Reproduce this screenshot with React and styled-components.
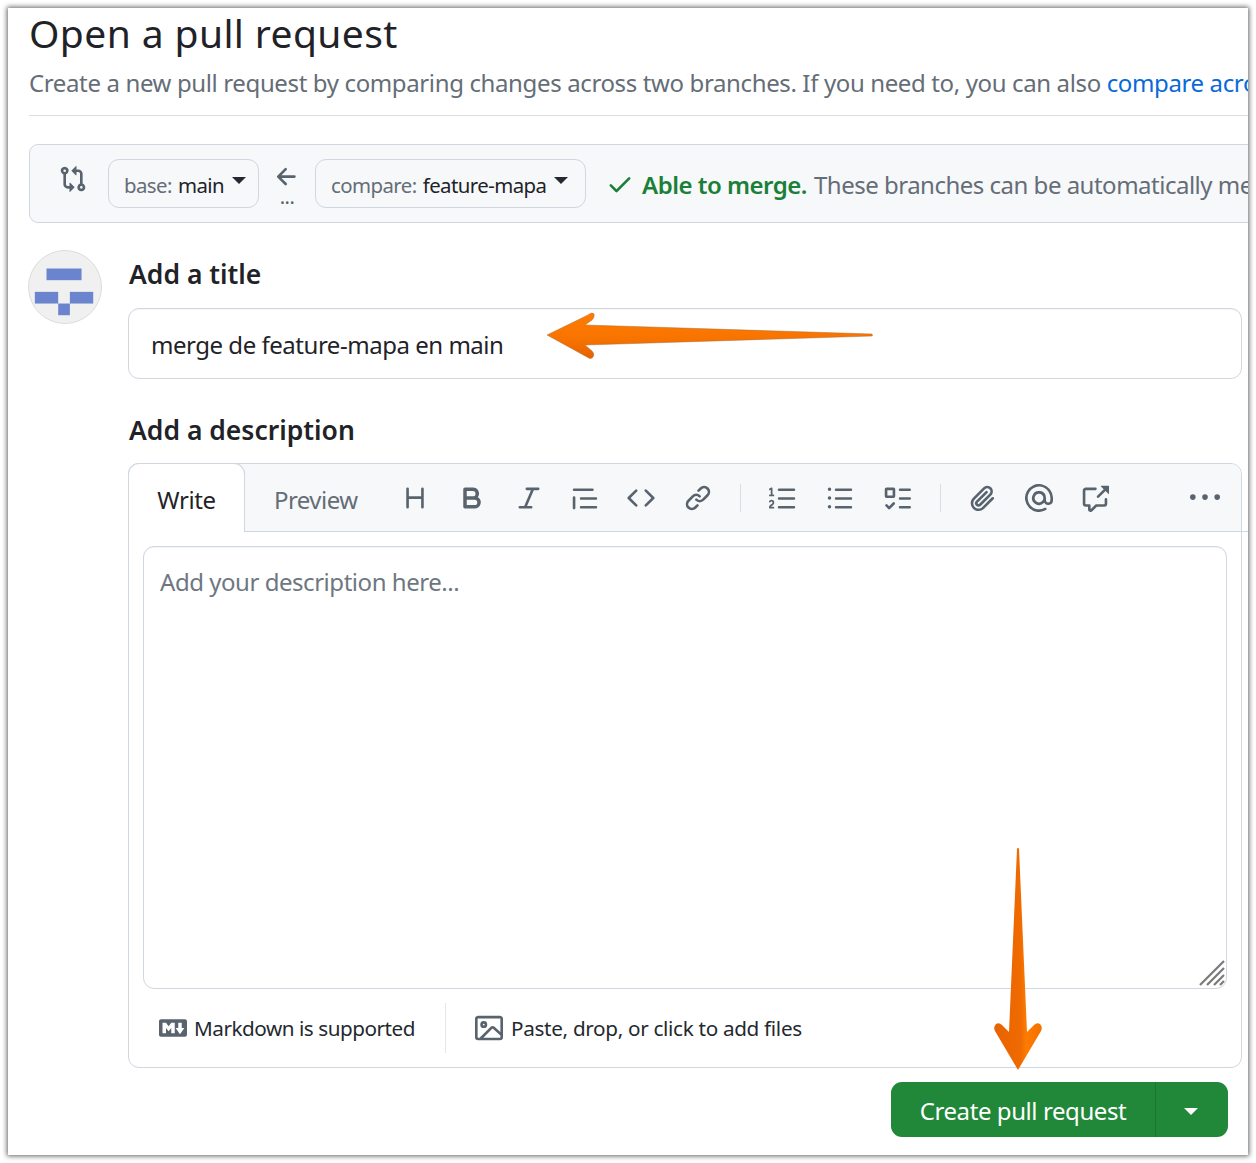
import React from "react";
import styled, { createGlobalStyle } from "styled-components";

const Global = createGlobalStyle`
  html, body { margin: 0; padding: 0; background: #fff; }
  body { font-family: "Noto Sans", "Open Sans", sans-serif; color: #1f2328; }
  * { box-sizing: border-box; }
`;

const Frame = styled.div`
  width: 1256px;
  height: 1163px;
  padding: 8px;
  overflow: hidden;
`;

const Panel = styled.main`
  position: relative;
  width: 1240px;
  height: 1147px;
  background: #fff;
  overflow: hidden;
  padding-left: 21px;
`;

const FrameShadow = styled.div`
  box-shadow: 0 0 5px 1px rgba(0, 0, 0, 0.62);
  width: 1240px;
  height: 1147px;
`;

const Title = styled.h1`
  margin: 0;
  font-size: 39px;
  font-weight: 400;
  line-height: 50px;
  white-space: nowrap;
  letter-spacing: 0.4px;
`;

const Sub = styled.p`
  margin: 8px 0 0 0;
  font-size: 24px;
  line-height: 34px;
  letter-spacing: -0.37px;
  color: #656d76;
  white-space: nowrap;
  height: 49px;
`;

const Link = styled.span`
  color: #0969da;
`;

const Rule = styled.div`
  height: 1px;
  background: #d8dee4;
  width: 1400px;
`;

const RangeBar = styled.section`
  display: flex;
  align-items: flex-start;
  width: 1400px;
  height: 79px;
  margin-top: 28px;
  background: #f6f8fa;
  border: 1px solid #d0d7de;
  border-radius: 9px;
  padding: 14px 0 0 29px;
  white-space: nowrap;
`;

const Ico = styled.svg`
  display: block;
  flex: none;
  fill: ${(p) => p.$color || "#59636e"};
`;

const CompareIco = styled.div`
  margin: 6px 21px 0 0;
`;

const Branch = styled.div`
  display: flex;
  align-items: center;
  width: ${(p) => p.$w}px;
  height: 49px;
  border: 1px solid #d0d7de;
  border-radius: 11px;
  padding: 2px 0 0 15px;
  font-size: 20.4px;
  letter-spacing: -0.56px;
  color: #656d76;
  position: relative;
`;

const BranchName = styled.span`
  color: #1f2328;
  margin-left: 6px;
`;

const Caret = styled.i`
  display: block;
  width: 0;
  height: 0;
  margin: -9px 0 0 8px;
  border-top: 7px solid #24292f;
  border-left: 7px solid transparent;
  border-right: 7px solid transparent;
`;

const Swap = styled.div`
  width: 56px;
  display: flex;
  flex-direction: column;
  align-items: center;
  padding-top: 4px;
  color: #59636e;
`;

const Dots = styled.span`
  font-size: 20px;
  line-height: 12px;
  margin-top: 0;
  letter-spacing: -0.5px;
`;

const Status = styled.div`
  display: flex;
  align-items: center;
  height: 50px;
  margin-left: 20px;
  font-size: 24px;
  letter-spacing: -0.5px;
  color: #656d76;
`;

const Able = styled.b`
  color: #1a7f37;
  font-weight: 600;
  margin: 0 7px 0 8px;
`;

const Composer = styled.section`
  display: grid;
  grid-template-columns: 74px 1114px;
  column-gap: 26px;
  margin: 27px 0 0 -1px;
`;

const Avatar = styled.div`
  width: 74px;
  height: 74px;
  border-radius: 50%;
  background: #f0f0f0;
  border: 1px solid #dcdcdc;
`;

const Label = styled.h2`
  margin: ${(p) => p.$top}px 0 0 1px;
  font-size: 26.5px;
  line-height: 36px;
  font-weight: 600;
  letter-spacing: 0;
`;

const TitleField = styled.div`
  height: 71px;
  margin-top: 16px;
  border: 1px solid #d0d7de;
  border-radius: 11px;
  padding: 2px 0 0 22px;
  display: flex;
  align-items: center;
  font-size: 24px;
  letter-spacing: -0.47px;
  box-shadow: inset 0 1px 0 rgba(208, 215, 222, 0.2);
  color: #1f2328;
`;

const Editor = styled.div`
  height: 605px;
  margin-top: 15px;
  border: 1px solid #d0d7de;
  border-radius: 11px;
  display: flex;
  flex-direction: column;
`;

const EditorHead = styled.div`
  display: flex;
  height: 68px;
  flex: none;
  background: #f6f8fa;
  border-radius: 11px 11px 0 0;
`;

const ActiveTab = styled.div`
  width: 117px;
  height: 69px;
  margin: -1px 0 -1px -1px;
  background: #fff;
  border: 1px solid #d0d7de;
  border-bottom: 0;
  border-radius: 11px 11px 0 0;
  font-size: 24px;
  letter-spacing: -0.4px;
  display: flex;
  align-items: center;
  justify-content: center;
  padding-top: 2px;
  flex: none;
`;

const Tools = styled.div`
  flex: 1;
  display: flex;
  align-items: center;
  border-bottom: 1px solid #d0d7de;
  padding-left: 29px;
`;

const Tab = styled.div`
  font-size: 24px;
  letter-spacing: -0.55px;
  color: #656d76;
  width: 113px;
  padding-top: 3px;
  flex: none;
`;

const Tool = styled.div`
  width: ${(p) => p.$w}px;
  flex: none;
  display: flex;
  justify-content: center;
`;

const Sep = styled.div`
  width: 1px;
  height: 28px;
  margin: 0 13px 0 14px;
  background: #d8dee4;
  flex: none;
`;

const EditorBody = styled.div`
  flex: 1;
  padding: 14px 14px 0;
  display: flex;
  flex-direction: column;
`;

const TextBox = styled.div`
  position: relative;
  height: 443px;
  flex: none;
  border: 1px solid #d0d7de;
  border-radius: 11px;
  padding: 18px 16px;
  font-size: 24px;
  line-height: 34px;
  letter-spacing: -0.46px;
  color: #6e7781;
  box-shadow: inset 0 1px 0 rgba(208, 215, 222, 0.25);
`;

const Handle = styled.svg`
  position: absolute;
  right: 1px;
  bottom: 2px;
  stroke: #7a7a7a;
  stroke-width: 2.2;
`;

const Foot = styled.div`
  display: flex;
  align-items: center;
  height: 78px;
  font-size: 20.7px;
  color: #24292f;
`;

const FootItem = styled.div`
  display: flex;
  align-items: center;
  gap: ${(p) => p.$gap}px;
  padding-left: ${(p) => p.$left}px;
  letter-spacing: ${(p) => p.$ls}px;
`;

const FootSep = styled.div`
  width: 1px;
  height: 50px;
  background: #e4e8ec;
  margin: 0 0 0 30px;
`;

const Actions = styled.div`
  display: flex;
  justify-content: flex-end;
  margin: 14px 14px 0 0;
`;

const Submit = styled.div`
  display: flex;
  width: 337px;
  height: 55px;
  background: #218739;
  border-radius: 11px;
  color: #fff;
  font-size: 24px;
  letter-spacing: -0.42px;
`;

const SubmitLabel = styled.div`
  width: 265px;
  padding-top: 1px;
  display: flex;
  align-items: center;
  justify-content: center;
  border-right: 1px solid #1c7531;
`;

const SubmitCaret = styled.div`
  flex: 1;
  display: flex;
  align-items: center;
  justify-content: center;
  padding-right: 2px;
  &::after {
    content: "";
    margin-top: 3px;
    border-top: 7px solid #fff;
    border-left: 7px solid transparent;
    border-right: 7px solid transparent;
  }
`;

const ArrowSvg = styled.svg`
  position: absolute;
  left: ${(p) => p.$x}px;
  top: ${(p) => p.$y}px;
  pointer-events: none;
  overflow: visible;
`;

const P = {
  compare: "M9.573.677A.25.25 0 0 1 10 .854V2.5h1A2.5 2.5 0 0 1 13.5 5v5.628a2.251 2.251 0 1 1-1.5 0V5a1 1 0 0 0-1-1h-1v1.646a.25.25 0 0 1-.427.177L7.177 3.427a.25.25 0 0 1 0-.354ZM6 12v-1.646a.25.25 0 0 1 .427-.177l2.396 2.396a.25.25 0 0 1 0 .354l-2.396 2.396A.25.25 0 0 1 6 15.146V13.5H5A2.5 2.5 0 0 1 2.5 11V5.372a2.25 2.25 0 1 1 1.5 0V11a1 1 0 0 0 1 1ZM4 3.25a.75.75 0 1 0-1.5 0 .75.75 0 0 0 1.5 0ZM12.75 12a.75.75 0 1 0 0 1.5.75.75 0 0 0 0-1.5Z",
  left: "M7.78 12.53a.75.75 0 0 1-1.06 0L2.47 8.28a.75.75 0 0 1 0-1.06l4.25-4.25a.751.751 0 0 1 1.042.018.751.751 0 0 1 .018 1.042L4.81 7h7.44a.75.75 0 0 1 0 1.5H4.81l2.97 2.97a.75.75 0 0 1 0 1.06Z",
  check: "M13.78 4.22a.75.75 0 0 1 0 1.06l-7.25 7.25a.75.75 0 0 1-1.06 0L2.22 9.28a.751.751 0 0 1 .018-1.042.751.751 0 0 1 1.042-.018L6 10.94l6.72-6.72a.75.75 0 0 1 1.06 0Z",
  heading: "M3.75 2a.75.75 0 0 1 .75.75V7h7V2.75a.75.75 0 0 1 1.5 0v10.5a.75.75 0 0 1-1.5 0V8.5h-7v4.75a.75.75 0 0 1-1.5 0V2.75A.75.75 0 0 1 3.75 2Z",
  bold: "M4 2h4.5a3.501 3.501 0 0 1 2.852 5.53A3.499 3.499 0 0 1 9.5 14H4a1 1 0 0 1-1-1V3a1 1 0 0 1 1-1Zm1 7v3h4.5a1.5 1.5 0 0 0 0-3Zm3.5-2a1.5 1.5 0 0 0 0-3H5v3Z",
  italic: "M6 2.75A.75.75 0 0 1 6.75 2h6.5a.75.75 0 0 1 0 1.5h-2.505l-3.858 9H9.25a.75.75 0 0 1 0 1.5h-6.5a.75.75 0 0 1 0-1.5h2.505l3.858-9H6.75A.75.75 0 0 1 6 2.75Z",
  quote: "M1.75 2.5h10.5a.75.75 0 0 1 0 1.5H1.75a.75.75 0 0 1 0-1.5Zm4 5h8.5a.75.75 0 0 1 0 1.5h-8.5a.75.75 0 0 1 0-1.5Zm0 5h8.5a.75.75 0 0 1 0 1.5h-8.5a.75.75 0 0 1 0-1.5ZM2.5 7.75v6a.75.75 0 0 1-1.5 0v-6a.75.75 0 0 1 1.5 0Z",
  code: "m11.28 3.22 4.25 4.25a.75.75 0 0 1 0 1.06l-4.25 4.25a.749.749 0 0 1-1.275-.326.749.749 0 0 1 .215-.734L13.94 8l-3.72-3.72a.749.749 0 0 1 .326-1.275.749.749 0 0 1 .734.215Zm-6.56 0a.751.751 0 0 1 1.042.018.751.751 0 0 1 .018 1.042L2.06 8l3.72 3.72a.749.749 0 0 1-.326 1.275.749.749 0 0 1-.734-.215L.47 8.53a.75.75 0 0 1 0-1.06Z",
  link: "m7.775 3.275 1.25-1.25a3.5 3.5 0 1 1 4.95 4.95l-2.5 2.5a3.5 3.5 0 0 1-4.95 0 .751.751 0 0 1 .018-1.042.751.751 0 0 1 1.042-.018 1.998 1.998 0 0 0 2.83 0l2.5-2.5a2.002 2.002 0 0 0-2.83-2.83l-1.25 1.25a.751.751 0 0 1-1.042-.018.751.751 0 0 1-.018-1.042Zm-4.69 9.64a1.998 1.998 0 0 0 2.83 0l1.25-1.25a.751.751 0 0 1 1.042.018.751.751 0 0 1 .018 1.042l-1.25 1.25a3.5 3.5 0 1 1-4.95-4.95l2.5-2.5a3.5 3.5 0 0 1 4.95 0 .751.751 0 0 1-.018 1.042.751.751 0 0 1-1.042.018 1.998 1.998 0 0 0-2.83 0l-2.5 2.5a1.998 1.998 0 0 0 0 2.83Z",
  ol: "M5 3.25a.75.75 0 0 1 .75-.75h8.5a.75.75 0 0 1 0 1.5h-8.5A.75.75 0 0 1 5 3.25Zm0 5a.75.75 0 0 1 .75-.75h8.5a.75.75 0 0 1 0 1.5h-8.5A.75.75 0 0 1 5 8.25Zm0 5a.75.75 0 0 1 .75-.75h8.5a.75.75 0 0 1 0 1.5h-8.5a.75.75 0 0 1-.75-.75ZM.924 10.32a.5.5 0 0 1-.851-.525l.001-.001.001-.002.002-.004.007-.011c.097-.144.215-.273.348-.384.228-.19.588-.392 1.068-.392.468 0 .858.181 1.126.484.259.294.377.673.377 1.038 0 .987-.686 1.495-1.156 1.845l-.047.035c-.303.225-.522.4-.654.597h1.357a.5.5 0 0 1 0 1H.5a.5.5 0 0 1-.5-.5c0-1.005.692-1.52 1.167-1.875l.035-.025c.531-.396.8-.625.8-1.078a.57.57 0 0 0-.128-.376C1.806 10.068 1.695 10 1.5 10a.658.658 0 0 0-.429.163.835.835 0 0 0-.144.153ZM2.003 2.5V6h.503a.5.5 0 0 1 0 1H.5a.5.5 0 0 1 0-1h.503V3.308l-.28.14a.5.5 0 0 1-.446-.895l1.003-.5a.5.5 0 0 1 .723.447Z",
  ul: "M5.75 2.5h8.5a.75.75 0 0 1 0 1.5h-8.5a.75.75 0 0 1 0-1.5Zm0 5h8.5a.75.75 0 0 1 0 1.5h-8.5a.75.75 0 0 1 0-1.5Zm0 5h8.5a.75.75 0 0 1 0 1.5h-8.5a.75.75 0 0 1 0-1.5ZM2 14a1 1 0 1 1 0-2 1 1 0 0 1 0 2Zm1-6a1 1 0 1 1-2 0 1 1 0 0 1 2 0ZM2 4a1 1 0 1 1 0-2 1 1 0 0 1 0 2Z",
  task: "M2 2h4a1 1 0 0 1 1 1v4a1 1 0 0 1-1 1H2a1 1 0 0 1-1-1V3a1 1 0 0 1 1-1Zm4.655 8.595a.75.75 0 0 1 0 1.06L4.03 14.28a.75.75 0 0 1-1.06 0l-1.5-1.5a.749.749 0 0 1 .326-1.275.749.749 0 0 1 .734.215l.97.97 2.095-2.095a.75.75 0 0 1 1.06 0ZM9.75 2.5h5.5a.75.75 0 0 1 0 1.5h-5.5a.75.75 0 0 1 0-1.5Zm0 5h5.5a.75.75 0 0 1 0 1.5h-5.5a.75.75 0 0 1 0-1.5Zm0 5h5.5a.75.75 0 0 1 0 1.5h-5.5a.75.75 0 0 1 0-1.5Zm-7.25-9v3h3v-3Z",
  clip: "M12.212 3.02a1.753 1.753 0 0 0-2.478.003l-5.83 5.83a3.007 3.007 0 0 0-.88 2.127c0 .795.315 1.551.88 2.116.567.567 1.333.89 2.126.89.79 0 1.548-.321 2.116-.89l5.48-5.48a.75.75 0 0 1 1.061 1.06l-5.48 5.48a4.492 4.492 0 0 1-3.177 1.33c-1.2 0-2.345-.487-3.187-1.33a4.483 4.483 0 0 1-1.32-3.177c0-1.195.475-2.341 1.32-3.186l5.83-5.83a3.25 3.25 0 0 1 5.553 2.297c0 .863-.343 1.691-.953 2.301L7.439 12.39c-.375.377-.884.59-1.416.593a1.998 1.998 0 0 1-1.412-.593 1.992 1.992 0 0 1 0-2.828l5.48-5.48a.751.751 0 0 1 1.042.018.751.751 0 0 1 .018 1.042l-5.48 5.48a.492.492 0 0 0 0 .707.499.499 0 0 0 .706 0l5.833-5.827a1.755 1.755 0 0 0 0-2.481Z",
  at: "M4.75 2.37a6.501 6.501 0 0 0 6.5 11.26.75.75 0 0 1 .75 1.298A7.999 7.999 0 0 1 .989 4.148 8 8 0 0 1 16 7.75v1.5a2.75 2.75 0 0 1-5.072 1.475 3.999 3.999 0 0 1-6.65-4.19A4 4 0 0 1 12 8v1.25a1.25 1.25 0 0 0 2.5 0V7.867a6.5 6.5 0 0 0-9.75-5.496ZM10.5 8a2.5 2.5 0 1 0-5 0 2.5 2.5 0 0 0 5 0Z",
  xref: "M2.75 3.5a.25.25 0 0 0-.25.25v7.5c0 .138.112.25.25.25h2a.75.75 0 0 1 .75.75v2.19l2.72-2.72a.749.749 0 0 1 .53-.22h4.5a.25.25 0 0 0 .25-.25v-2.5a.75.75 0 0 1 1.5 0v2.5A1.75 1.75 0 0 1 13.25 13H9.06l-2.573 2.573A1.458 1.458 0 0 1 4 14.543V13H2.75A1.75 1.75 0 0 1 1 11.25v-7.5C1 2.784 1.784 2 2.75 2h5.5a.75.75 0 0 1 0 1.5ZM16 1.25v4.146a.25.25 0 0 1-.427.177L14.03 4.03l-3.75 3.75a.749.749 0 0 1-1.275-.326.749.749 0 0 1 .215-.734l3.75-3.75-1.543-1.543A.25.25 0 0 1 11.604 1h4.146a.25.25 0 0 1 .25.25Z",
  kebab: "M8 9a1.5 1.5 0 1 0 0-3 1.5 1.5 0 0 0 0 3ZM1.5 9a1.5 1.5 0 1 0 0-3 1.5 1.5 0 0 0 0 3Zm13 0a1.5 1.5 0 1 0 0-3 1.5 1.5 0 0 0 0 3Z",
  md: "M14.85 3c.63 0 1.15.52 1.14 1.15v7.7c0 .63-.51 1.15-1.15 1.15H1.15C.52 13 0 12.48 0 11.84V4.15C0 3.52.52 3 1.15 3ZM9 11V5H7L5.5 7 4 5H2v6h2V8l1.5 1.92L7 8v3Zm2.99.5L14.5 8H13V5h-2v3H9.5Z",
  image: "M16 13.25A1.75 1.75 0 0 1 14.25 15H1.75A1.75 1.75 0 0 1 0 13.25V2.75C0 1.784.784 1 1.75 1h12.5c.966 0 1.75.784 1.75 1.75ZM1.75 2.5a.25.25 0 0 0-.25.25v10.5c0 .138.112.25.25.25h.94l.03-.03 6.077-6.078a1.75 1.75 0 0 1 2.412-.06L14.5 10.31V2.75a.25.25 0 0 0-.25-.25Zm12.5 11a.25.25 0 0 0 .25-.25v-.917l-4.298-3.889a.25.25 0 0 0-.344.009L4.81 13.5ZM7 6a2 2 0 1 1-3.999.001A2 2 0 0 1 7 6ZM5.5 6a.5.5 0 1 0-1 0 .5.5 0 0 0 1 0Z",
};

const Icon = ({ d, size = 28, color }) => (
  <Ico viewBox="0 0 16 16" width={size} height={size} $color={color}>
    <path d={d} />
  </Ico>
);

const toolsA = [
  ["heading", 56], ["bold", 57], ["italic", 57], ["quote", 56], ["code", 56], ["link", 57],
];
const toolsB = [["ol", 58], ["ul", 56], ["task", 58]];
const toolsC = [["clip", 56], ["at", 57], ["xref", 56]];

export default function App() {
  return (
    <>
      <Global />
      <Frame>
        <FrameShadow>
          <Panel>
            <Title>Open a pull request</Title>
            <Sub>
              Create a new pull request by comparing changes across two branches. If you need to, you can also <Link>compare across forks.</Link>
            </Sub>
            <Rule />
            <RangeBar>
              <CompareIco>
                <Icon d={P.compare} />
              </CompareIco>
              <Branch $w={151}>
                base:<BranchName>main</BranchName>
                <Caret />
              </Branch>
              <Swap>
                <Icon d={P.left} />
                <Dots>...</Dots>
              </Swap>
              <Branch $w={271}>
                compare:<BranchName>feature-mapa</BranchName>
                <Caret />
              </Branch>
              <Status>
                <Icon d={P.check} color="#1a7f37" />
                <Able>Able to merge.</Able>
                These branches can be automatically merged.
              </Status>
            </RangeBar>
            <Composer>
              <Avatar>
                <svg viewBox="0 0 74 74" width="72" height="72">
                  <g fill="#6a84cd">
                    <rect x="18" y="18" width="36" height="12" />
                    <rect x="6" y="42" width="24" height="12" />
                    <rect x="42" y="42" width="24" height="12" />
                    <rect x="30" y="54" width="12" height="12" />
                  </g>
                </svg>
              </Avatar>
              <div>
                <Label $top={6}>Add a title</Label>
                <TitleField>merge de feature-mapa en main</TitleField>
                <Label $top={33}>Add a description</Label>
                <Editor>
                  <EditorHead>
                    <ActiveTab>Write</ActiveTab>
                    <Tools>
                      <Tab>Preview</Tab>
                      {toolsA.map(([k, w]) => (
                        <Tool key={k} $w={w}><Icon d={P[k]} /></Tool>
                      ))}
                      <Sep />
                      {toolsB.map(([k, w]) => (
                        <Tool key={k} $w={w}><Icon d={P[k]} /></Tool>
                      ))}
                      <Sep />
                      {toolsC.map(([k, w]) => (
                        <Tool key={k} $w={w}><Icon d={P[k]} /></Tool>
                      ))}
                      <Tool $w={164}><Icon d={P.kebab} size={30} /></Tool>
                    </Tools>
                  </EditorHead>
                  <EditorBody>
                    <TextBox>
                      Add your description here...
                      <Handle width="26" height="26" viewBox="0 0 26 26">
                        <path d="M1 25 25 1M8 25 25 8M15 25 25 15M21 25l4-4" fill="none" />
                      </Handle>
                    </TextBox>
                    <Foot>
                      <FootItem $left={16} $gap={7} $ls={-0.47}>
                        <Icon d={P.md} size={28} />
                        Markdown is supported
                      </FootItem>
                      <FootSep />
                      <FootItem $left={29} $gap={8} $ls={-0.32}>
                        <Icon d={P.image} size={28} />
                        Paste, drop, or click to add files
                      </FootItem>
                    </Foot>
                  </EditorBody>
                </Editor>
                <Actions>
                  <Submit>
                    <SubmitLabel>Create pull request</SubmitLabel>
                    <SubmitCaret />
                  </Submit>
                </Actions>
              </div>
            </Composer>

            <ArrowSvg $x={534} $y={300} width="332" height="54">
              <defs>
                <linearGradient id="ah" x1="0" y1="0" x2="0" y2="1">
                  <stop offset="0" stopColor="#ff7c00" />
                  <stop offset="0.55" stopColor="#f87400" />
                  <stop offset="1" stopColor="#e46200" />
                </linearGradient>
              </defs>
              <path
                d="M5 27 46 7 Q50 3.500 52 6 Q53 9 50 12 L43 17 L330 26 Q331 27.500 330 28 L43 37 L50 43 Q53 46 51 49 Q49 52 45 49Z"
                fill="url(#ah)"
                stroke="#a8703c"
                strokeWidth="0.5"
              />
            </ArrowSvg>
            <ArrowSvg $x={982} $y={838} width="56" height="226">
              <defs>
                <linearGradient id="av" x1="0" y1="0" x2="1" y2="0">
                  <stop offset="0" stopColor="#e86300" />
                  <stop offset="0.55" stopColor="#ef6a00" />
                  <stop offset="0.68" stopColor="#ff7c00" />
                  <stop offset="1" stopColor="#f47000" />
                </linearGradient>
              </defs>
              <path
                d="M28 2 Q29 2 29 3 L37 186 L44 179 Q47 176 50 178 Q53 181 51 185 L28 224 L5 185 Q3 181 6 178 Q9 176 12 179 L19 186 L27 3 Q27 2 28 2Z"
                fill="url(#av)"
              />
            </ArrowSvg>
          </Panel>
        </FrameShadow>
      </Frame>
    </>
  );
}
